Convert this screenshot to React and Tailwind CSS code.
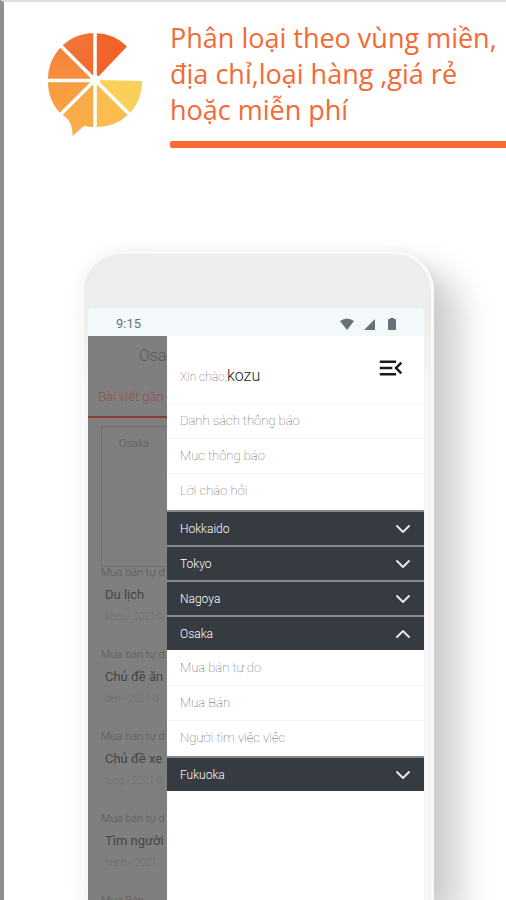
import { MdMenuOpen } from "react-icons/md";
import { ChevronDown, ChevronUp } from "lucide-react";

const posts = [
  { category: "Mua bán tự d", title: "Du lịch", meta: "kozu - 2021.0" },
  { category: "Mua bán tự d", title: "Chủ đề ăn", meta: "tien - 2021.0" },
  { category: "Mua bán tự d", title: "Chủ đề xe", meta: "tung - 2021.0" },
  { category: "Mua bán tự d", title: "Tìm người", meta: "hanh - 2021" },
  { category: "Mua Bán" },
];

const links = ["Danh sách thông báo", "Mục thông báo", "Lời chào hỏi"];

const regions = [
  { name: "Hokkaido" },
  { name: "Tokyo" },
  { name: "Nagoya" },
  { name: "Osaka", items: ["Mua bán tự do", "Mua Bán", "Người tìm việc việc"] },
  { name: "Fukuoka" },
];

function Logo() {
  return (
    <svg viewBox="0 0 96 106" className="mt-[30px] h-[106px] w-24 shrink-0" aria-hidden="true">
      <defs>
        <linearGradient id="wedgeA" x1="0" y1="0" x2="1" y2="1">
          <stop offset="0" stopColor="#f27a3a" />
          <stop offset="1" stopColor="#f4662c" />
        </linearGradient>
        <linearGradient id="wedgeB" x1="0" y1="0" x2="0" y2="1">
          <stop offset="0" stopColor="#f5813a" />
          <stop offset="1" stopColor="#f6903f" />
        </linearGradient>
        <linearGradient id="wedgeC" x1="0" y1="0" x2="1" y2="1">
          <stop offset="0" stopColor="#f79a40" />
          <stop offset="1" stopColor="#f9a645" />
        </linearGradient>
      </defs>
      <path fill="#f4622c" d="M48 48V1A47 47 0 0 1 80 14.500Z" />
      <path fill="url(#wedgeA)" d="M48 48V1A47 47 0 0 0 14 15Z" />
      <path fill="url(#wedgeB)" d="M48 48L14 15A47 47 0 0 0 1 48Z" />
      <path fill="url(#wedgeC)" d="M48 48H1A47 47 0 0 0 14 82Z" />
      <path fill="#f9ad4a" d="M48 48L14 82Q26 88 25.500 104L37 94Q42 95 48 95Z" />
      <path fill="#fbbc50" d="M48 48V95A47 47 0 0 0 82 82Z" />
      <path fill="#fbd05a" d="M48 48L82 82A47 47 0 0 0 95 49Z" />
      <path
        stroke="#fff"
        strokeWidth="3.600"
        d="M48 0V98M0 48.500H48M14 14L82 82M14 82L48 48"
      />
      <circle cx="48" cy="48" r="5" fill="#fff" />
    </svg>
  );
}

function StatusBar() {
  return (
    <div className="flex h-7 items-center justify-between rounded-t-sm bg-[#f3f9fb] pt-1 pr-7 pl-7 text-[#66717a]">
      <span className="text-[13px] leading-4">9:15</span>
      <svg viewBox="0 0 56 12" className="h-3 w-14" fill="currentColor" aria-hidden="true">
        <path d="M0 3Q7 -2 14 3L7 12Z" />
        <path d="M35 1V12H24Z" />
        <path d="M50 0h4v1h1q1 0 1 1v9q0 1-1 1h-6q-1 0-1-1V2q0-1 1-1h1z" />
      </svg>
    </div>
  );
}

function Feed() {
  return (
    <section className="w-[79px] shrink-0 overflow-hidden bg-[#7f7f7f] whitespace-nowrap text-[#5a5a5a]">
      <h2 className="h-10 pl-[51px] text-base leading-10 font-light">Osa</h2>
      <p className="h-[42px] border-b-2 border-[#8f3a30] pl-[10px] text-[13px] leading-[42px] font-light text-[#8f504c]">
        Bài viết gần
      </p>
      <div className="mt-2 ml-[13px] h-[141px] border-y border-l border-[#6f6f6f] pt-2 pl-[17px] text-[11px] leading-[18px] font-light">
        Osaka
      </div>
      {posts.map((post, i) => (
        <article key={i} className="h-[82px] pl-[13px]">
          <p className="h-3 text-[11px] leading-3 font-light">{post.category}</p>
          {post.title && (
            <>
              <h3 className="mt-1 pl-1 text-[13px] leading-6 text-[#444]">{post.title}</h3>
              <p className="pl-1 text-[10px] leading-5 font-thin">{post.meta}</p>
            </>
          )}
        </article>
      ))}
    </section>
  );
}

function MenuLink({ label }) {
  return (
    <li className="border-b border-[#f3f3f3] last:border-transparent">
      <a href="#" className="block pl-[13px] text-[13px] leading-[34px] font-thin text-[#555]">
        {label}
      </a>
    </li>
  );
}

function Region({ region }) {
  const Chevron = region.items ? ChevronUp : ChevronDown;
  return (
    <li>
      <button
        type="button"
        aria-expanded={Boolean(region.items)}
        className="flex h-[35px] w-full items-center justify-between border-t-2 border-[#85888c] bg-[#363a41] pr-[9px] pl-[13px] text-xs font-light text-white"
      >
        {region.name}
        <Chevron className="h-6 w-6 text-[#e4e6e8]" strokeWidth={2} />
      </button>
      {region.items && (
        <ul className="pt-px">
          {region.items.map((item) => (
            <MenuLink key={item} label={item} />
          ))}
        </ul>
      )}
    </li>
  );
}

function Drawer() {
  return (
    <nav className="min-w-0 flex-1 bg-white">
      <header className="flex h-[68px] items-center justify-between border-b border-[#f3f3f3] pr-[18px] pl-[13px]">
        <p className="pt-3 text-xs leading-5 font-thin text-[#555]">
          Xin chào,<span className="text-base font-light text-[#222]">kozu</span>
        </p>
        <button type="button" aria-label="Đóng menu" className="pb-1 text-[#1c1c1c]">
          <MdMenuOpen className="h-[30px] w-[30px]" />
        </button>
      </header>
      <ul className="pb-px">
        {links.map((label) => (
          <MenuLink key={label} label={label} />
        ))}
      </ul>
      <ul>
        {regions.map((region) => (
          <Region key={region.name} region={region} />
        ))}
      </ul>
    </nav>
  );
}

export default function App() {
  return (
    <main className="flex h-screen flex-col overflow-hidden border-t-2 border-l-4 border-t-[#dedede] border-l-[#8f8f8f] bg-white font-['Roboto',sans-serif]">
      <div className="flex shrink-0 pl-[43px]">
        <Logo />
        <div className="ml-[27px] min-w-0 flex-1 pt-[18px]">
          <h1 className="font-['Open_Sans',sans-serif] text-[27px] leading-9 whitespace-nowrap text-[#f26a35]">
            Phân loại theo vùng miền,
            <br />
            địa chỉ,loại hàng ,giá rẻ
            <br />
            hoặc miễn phí
          </h1>
          <div className="mt-[13px] h-[7px] rounded-l-xs bg-[#f76b32]" />
        </div>
      </div>
      <div className="mt-[103px] mr-[72px] ml-[77px] flex min-h-0 flex-1 flex-col rounded-t-[40px] border-x-[3px] border-t-[3px] border-[#f9f9f9] bg-linear-to-b from-[#ededed] from-10% to-[#f5f5f5] to-20% pt-[54px] pr-[7px] pl-1 shadow-[28px_20px_32px_rgba(0,0,0,0.18),0_0_16px_rgba(0,0,0,0.06)]">
        <StatusBar />
        <div className="flex min-h-0 flex-1">
          <Feed />
          <Drawer />
        </div>
      </div>
    </main>
  );
}
